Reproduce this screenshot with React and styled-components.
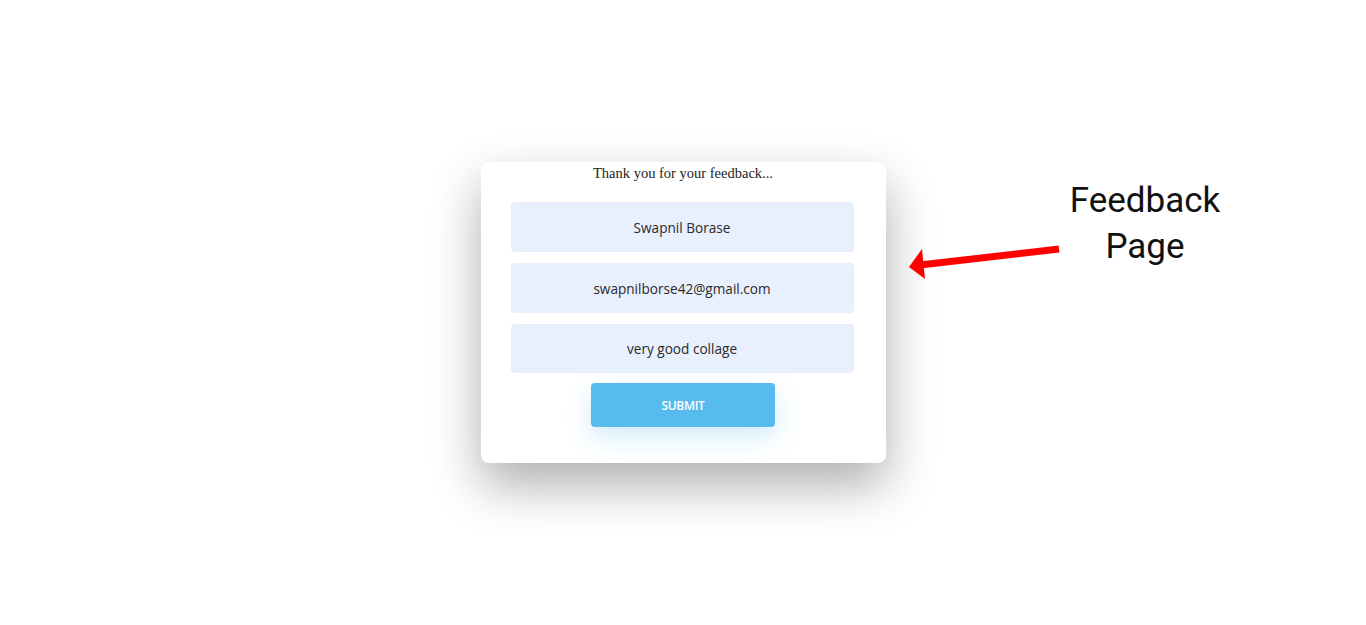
import React, { useState } from 'react';
import styled, { createGlobalStyle } from 'styled-components';

const GlobalStyle = createGlobalStyle`
  html, body {
    margin: 0;
    padding: 0;
    background: #ffffff;
  }
`;

const Page = styled.div`
  position: relative;
  width: 1366px;
  height: 625px;
  display: flex;
  align-items: center;
  justify-content: center;
  overflow: hidden;
`;

const Card = styled.form`
  width: 405px;
  height: 301px;
  box-sizing: border-box;
  padding: 0 32px 36px 30px;
  background: #ffffff;
  border-radius: 8px;
  box-shadow: 0 22px 50px rgba(0, 0, 0, 0.32);
  display: flex;
  flex-direction: column;
  align-items: center;
`;

const Title = styled.p`
  margin: 2px 0 20px 2px;
  height: 18px;
  line-height: 18px;
  font-family: 'Liberation Serif', 'Times New Roman', serif;
  font-size: 14.5px;
  color: #222;
`;

const Field = styled.input`
  width: 100%;
  height: 50px;
  box-sizing: border-box;
  margin-bottom: ${p => (p.last ? '10px' : '11px')};
  border: 1px solid #e6eefc;
  border-radius: 4px;
  background: #e8f0fe;
  text-align: center;
  font-family: 'Open Sans', 'Noto Sans', sans-serif;
  font-size: 13.6px;
  padding-top: 2px;
  color: #2a2a2a;
  outline: none;
`;

const Submit = styled.button`
  width: 184px;
  height: 44px;
  margin-left: 2px;
  border: none;
  border-radius: 4px;
  background: #58bbed;
  color: #ffffff;
  font-family: 'Open Sans', 'Noto Sans', sans-serif;
  font-size: 12px;
  font-weight: 600;
  letter-spacing: -0.3px;
  box-shadow: 0 10px 24px rgba(88, 187, 237, 0.28);
  cursor: pointer;
`;

const Note = styled.div`
  position: absolute;
  left: 1045px;
  top: 178px;
  width: 200px;
  text-align: center;
  font-family: Roboto, 'Liberation Sans', sans-serif;
  font-size: 35px;
  line-height: 46px;
  color: #111;
`;

const Arrow = styled.svg`
  position: absolute;
  left: 900px;
  top: 240px;
`;

const App = () => {
  const [values, setValues] = useState({
    name: 'Swapnil Borase',
    email: 'swapnilborse42@gmail.com',
    message: 'very good collage'
  });

  const update = key => e => setValues({ ...values, [key]: e.target.value });

  return (
    <>
      <GlobalStyle />
      <Page>
        <Card onSubmit={e => e.preventDefault()}>
          <Title>Thank you for your feedback...</Title>
          <Field value={values.name} onChange={update('name')} />
          <Field value={values.email} onChange={update('email')} />
          <Field last value={values.message} onChange={update('message')} />
          <Submit type="submit">SUBMIT</Submit>
        </Card>

        <Note>
          Feedback
          <br />
          Page
        </Note>
        <Arrow width="170" height="50" viewBox="0 0 170 50">
          <line x1="159" y1="9" x2="20" y2="25" stroke="#ff0000" strokeWidth="7" />
          <polygon points="9,27 22,9 25,39" fill="#ff0000" />
        </Arrow>
      </Page>
    </>
  );
};

export default App;
